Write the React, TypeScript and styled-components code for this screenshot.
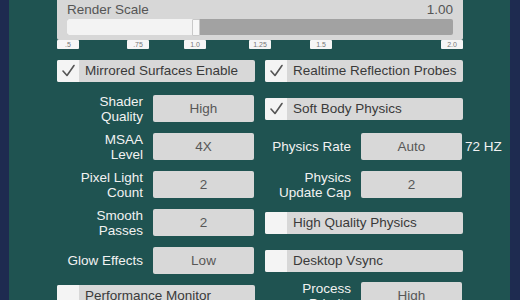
import styled, { createGlobalStyle } from "styled-components";

const GlobalStyle = createGlobalStyle`
  html, body {
    margin: 0;
    padding: 0;
    width: 520px;
    height: 300px;
    overflow: hidden;
    background: #1f5351;
  }
  * {
    box-sizing: border-box;
  }
`;

const ticks = [
  { label: ".5", left: 0 },
  { label: ".75", left: 70 },
  { label: "1.0", left: 127 },
  { label: "1.25", left: 192 },
  { label: "1.5", left: 253 },
  { label: "2.0", left: 384 },
];

type Row =
  | { kind: "select"; label: string; value: string; extra?: string }
  | { kind: "toggle"; label: string; checked: boolean };

const leftRows: Row[] = [
  { kind: "select", label: "Shader\nQuality", value: "High" },
  { kind: "select", label: "MSAA \nLevel", value: "4X" },
  { kind: "select", label: "Pixel Light\nCount", value: "2" },
  { kind: "select", label: "Smooth\nPasses", value: "2" },
  { kind: "select", label: "Glow Effects", value: "Low" },
  { kind: "toggle", label: "Performance Monitor", checked: false },
];

const rightRows: Row[] = [
  { kind: "toggle", label: "Soft Body Physics", checked: true },
  { kind: "select", label: "Physics Rate", value: "Auto", extra: "72 HZ" },
  { kind: "select", label: "Physics\nUpdate Cap", value: "2" },
  { kind: "toggle", label: "High Quality Physics", checked: false },
  { kind: "toggle", label: "Desktop Vsync", checked: false },
  { kind: "select", label: "Process\nPriority", value: "High" },
];

const Check = () => (
  <svg width="22" height="22" viewBox="0 0 22 22">
    <path
      d="M6 11 L10 15.5 L17 5.5"
      fill="none"
      stroke="#555"
      strokeWidth="1.6"
      strokeLinecap="round"
      strokeLinejoin="round"
    />
  </svg>
);

const Toggle = ({ label, checked }: { label: string; checked: boolean }) => (
  <ToggleRow>
    <CheckBox>{checked && <Check />}</CheckBox>
    <ToggleText>{label}</ToggleText>
  </ToggleRow>
);

const Setting = ({ row }: { row: Row }) => {
  if (row.kind === "toggle") {
    return (
      <Cell>
        <Toggle label={row.label} checked={row.checked} />
      </Cell>
    );
  }
  return (
    <Cell>
      <SettingRow>
        <Label>{row.label}</Label>
        <SelectButton>{row.value}</SelectButton>
        {row.extra && <Extra>{row.extra}</Extra>}
      </SettingRow>
    </Cell>
  );
};

const App = (): JSX.Element => {
  const min = 0.5;
  const max = 2.0;
  const value = 1.0;
  const pct = ((value - min) / (max - min)) * 100;

  return (
    <Page>
      <GlobalStyle />
      <SideStrip />
      <Main>
        <Content>
          <ScalePanel>
            <ScaleHeader>
              <span>Render Scale</span>
              <span>1.00</span>
            </ScaleHeader>
            <Track>
              <Fill style={{ width: `${pct}%` }} />
              <Handle style={{ left: `calc(${pct}% - 4px)` }} />
            </Track>
          </ScalePanel>
          <TickRow>
            {ticks.map((t) => (
              <Tick key={t.label} style={{ left: t.left }}>
                {t.label}
              </Tick>
            ))}
          </TickRow>

          <TopToggles>
            <Toggle label="Mirrored Surfaces Enable" checked />
            <Toggle label="Realtime Reflection Probes" checked />
          </TopToggles>

          <Columns>
            <Column>
              {leftRows.map((r) => (
                <Setting key={r.label} row={r} />
              ))}
            </Column>
            <Column>
              {rightRows.map((r) => (
                <Setting key={r.label} row={r} />
              ))}
            </Column>
          </Columns>
        </Content>
      </Main>
      <SideStrip $right />
    </Page>
  );
};

export default App;

const Page = styled.div`
  width: 520px;
  height: 300px;
  display: flex;
  overflow: hidden;
  font-family: "Liberation Sans", Arial, sans-serif;
  font-size: 13.5px;
`;

const SideStrip = styled.div<{ $right?: boolean }>`
  width: ${(p) => (p.$right ? "10px" : "9px")};
  flex-shrink: 0;
  background: #1e2b50;
`;

const Main = styled.div`
  flex: 1;
  background: #1f5351;
  padding-left: 48px;
`;

const Content = styled.div`
  width: 406px;
  display: flex;
  flex-direction: column;
`;

const ScalePanel = styled.div`
  background: #d7d7d7;
  padding: 2px 10px 5px 10px;
  border-radius: 0 0 2px 2px;
`;

const ScaleHeader = styled.div`
  display: flex;
  justify-content: space-between;
  color: #555;
  font-size: 13.5px;
  line-height: 15px;
  height: 17px;
`;

const Track = styled.div`
  position: relative;
  height: 16px;
  background: #a2a2a2;
  border-radius: 2px;
`;

const Fill = styled.div`
  height: 100%;
  background: #f3f3f3;
  border-radius: 2px 0 0 2px;
`;

const Handle = styled.div`
  position: absolute;
  top: 0;
  width: 8px;
  height: 17px;
  background: #f7f7f7;
  border: 1px solid #c9c9c9;
  border-radius: 1px;
`;

const TickRow = styled.div`
  position: relative;
  height: 9px;
  margin-bottom: 11px;
`;

const Tick = styled.div`
  position: absolute;
  top: 0;
  width: 22px;
  height: 9px;
  background: #f6f6f6;
  border-radius: 1px;
  color: #777;
  font-size: 7px;
  line-height: 9px;
  text-align: center;
`;

const TopToggles = styled.div`
  display: grid;
  grid-template-columns: 198px 198px;
  column-gap: 10px;
  margin-bottom: 13px;
`;

const Columns = styled.div`
  display: grid;
  grid-template-columns: 198px 198px;
  column-gap: 10px;
`;

const Column = styled.div`
  display: flex;
  flex-direction: column;
  gap: 11px;

  & > div:last-child {
    margin-top: -3px;
  }
`;

const Cell = styled.div`
  height: 27px;
  display: flex;
  align-items: center;
`;

const ToggleRow = styled.div`
  width: 198px;
  height: 22px;
  display: flex;
  background: #d8d8d8;
  border-radius: 2px;
  overflow: hidden;
`;

const CheckBox = styled.div`
  width: 22px;
  height: 22px;
  flex-shrink: 0;
  background: #f4f4f4;
`;

const ToggleText = styled.div`
  padding-left: 6px;
  color: #3a3a3a;
  font-size: 13.5px;
  line-height: 22px;
  white-space: nowrap;
`;

const SettingRow = styled.div`
  display: flex;
  align-items: center;
  gap: 10px;
  width: 198px;
`;

const Label = styled.div`
  width: 86px;
  flex-shrink: 0;
  text-align: right;
  white-space: pre-line;
  color: #f2f2f2;
  font-size: 13.5px;
  line-height: 15px;
`;

const SelectButton = styled.div`
  width: 101px;
  height: 27px;
  flex-shrink: 0;
  background: #d8d8d8;
  border-radius: 2px;
  color: #575757;
  font-size: 13.5px;
  line-height: 27px;
  text-align: center;
`;

const Extra = styled.div`
  flex-shrink: 0;
  margin-left: -7px;
  color: #f2f2f2;
  font-size: 13.5px;
  white-space: nowrap;
`;
